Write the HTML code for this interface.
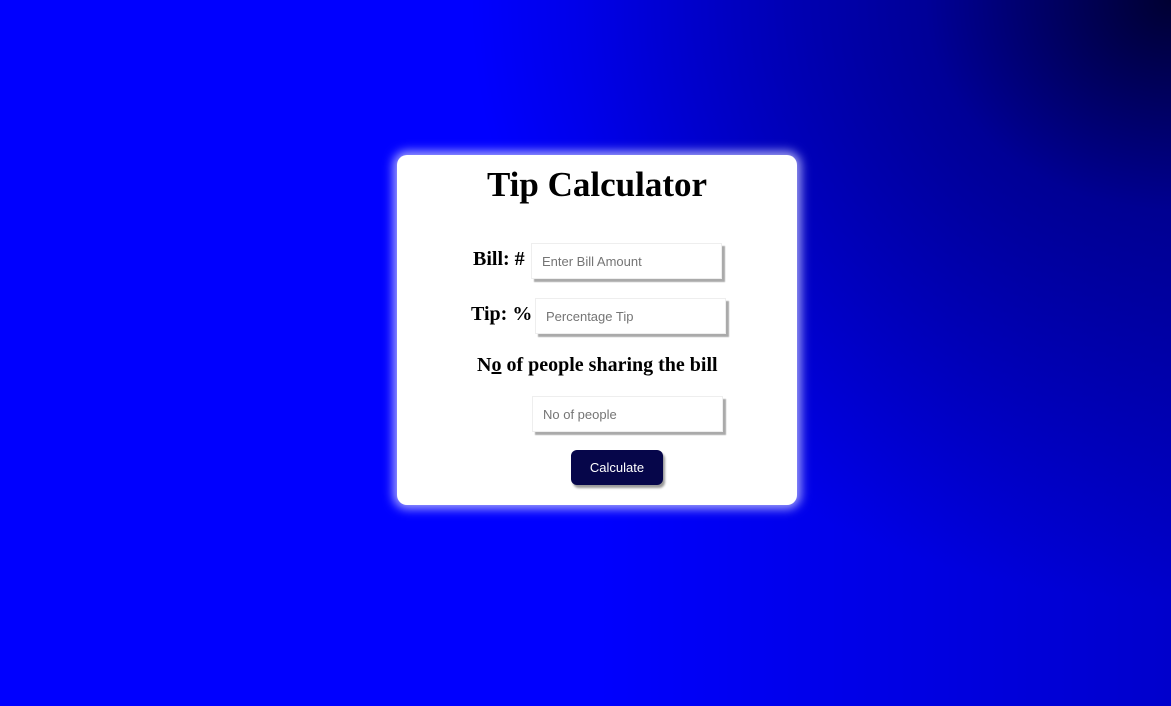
<!DOCTYPE html>
<html><head><style>
html,body{margin:0;width:1171px;height:706px;overflow:hidden}
body{background:radial-gradient(ellipse 700px 600px at 100% 0%,rgba(0,0,50,1) 0%,rgba(0,0,120,.7) 35%,rgba(0,0,200,0) 100%),linear-gradient(to right,#0000ff 0%,#0000ff 50%,#0000cc 100%);position:relative;font-family:"Liberation Serif",serif}
.card{position:absolute;left:397px;top:155px;width:400px;height:350px;background:#fff;border-radius:10px;box-shadow:0 0 10px 4px rgba(200,200,255,.8)}
.a{position:absolute;white-space:nowrap}
h1{position:absolute;margin:0;left:0;width:400px;text-align:center;top:10px;font-size:35px;font-weight:bold}
.lbl{font-weight:bold;font-size:20px}
.in{position:absolute;width:189px;height:36px;background:#fff;border:1px solid #eee;box-shadow:3px 3px 1px #aaa;font-family:"Liberation Sans",sans-serif;font-size:13px;color:#757575;line-height:36px;padding-left:10px;box-sizing:border-box}
.btn{position:absolute;left:174px;top:295px;width:92px;height:35px;background:#06064a;color:#fff;border-radius:6px;box-shadow:2px 3px 2px #999;font-family:"Liberation Sans",sans-serif;font-size:13px;text-align:center;line-height:35px}
</style></head><body>
<div class="card">
<h1>Tip Calculator</h1>
<div class="a lbl" style="left:76px;top:93px">Bill: #</div>
<div class="in" style="left:134px;top:88px;width:191px">Enter Bill Amount</div>
<div class="a lbl" style="left:74px;top:148px">Tip: %</div>
<div class="in" style="left:138px;top:143px;width:191px">Percentage Tip</div>
<div class="a lbl" style="left:80px;top:199px;font-size:20px">N<u>o</u> of people sharing the bill</div>
<div class="in" style="left:135px;top:241px;width:191px">No of people</div>
<div class="btn">Calculate</div>
</div>
</body></html>
